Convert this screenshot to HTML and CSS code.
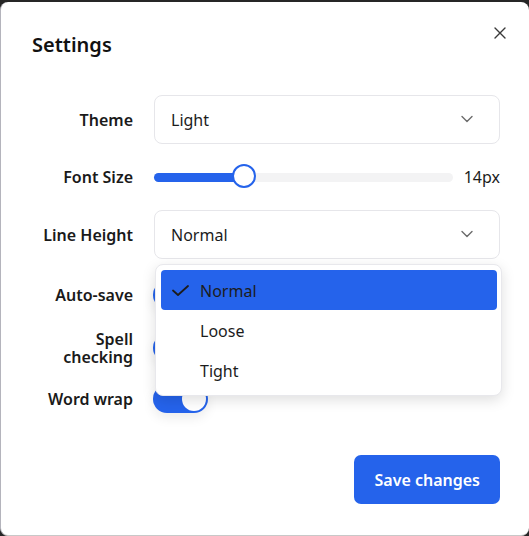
FILE: index.html
```html
<!DOCTYPE html>
<html lang="en">
<head>
<meta charset="utf-8">
<title>Settings</title>
<link rel="stylesheet" href="styles.css">
</head>
<body>
<div class="dialog">
  <h2 class="title">Settings</h2>
  <button class="close" aria-label="Close">
    <svg width="12" height="12" viewBox="0 0 12 12"><path d="M1 1 L11 11 M11 1 L1 11" stroke="#3a3a3a" stroke-width="1.4" fill="none" stroke-linecap="round"/></svg>
  </button>
  <div class="form">
    <div class="lbl r-theme">Theme</div>
    <div class="select r-theme">
      <span>Light</span>
      <svg class="chev" width="12" height="8" viewBox="0 0 12 8"><path d="M1 1.5 L6 6.5 L11 1.5" stroke="#6b6b6b" stroke-width="1.4" fill="none" stroke-linecap="round" stroke-linejoin="round"/></svg>
    </div>

    <div class="lbl r-font">Font Size</div>
    <div class="slider-row r-font">
      <div class="track">
        <div class="fill" style="width:30.1%"></div>
        <div class="thumb" style="left:30.1%"></div>
      </div>
      <span class="val">14px</span>
    </div>

    <div class="lbl r-lh">Line Height</div>
    <div class="select open r-lh">
      <span>Normal</span>
      <svg class="chev" width="12" height="8" viewBox="0 0 12 8"><path d="M1 1.5 L6 6.5 L11 1.5" stroke="#6b6b6b" stroke-width="1.4" fill="none" stroke-linecap="round" stroke-linejoin="round"/></svg>
      <div class="menu">
        <div class="item sel">
          <svg class="check" width="17" height="12" viewBox="0 0 17 12"><path d="M1 5.5 L6 10 L16 1" stroke="#1c1c1c" stroke-width="1.8" fill="none" stroke-linecap="round" stroke-linejoin="round"/></svg>
          Normal
        </div>
        <div class="item">Loose</div>
        <div class="item">Tight</div>
      </div>
    </div>

    <div class="lbl r-auto">Auto-save</div>
    <div class="tg-cell r-auto"><span class="toggle"><span class="knob"></span></span></div>

    <div class="lbl r-spell">Spell<br>checking</div>
    <div class="tg-cell r-spell"><span class="toggle"><span class="knob"></span></span></div>

    <div class="lbl r-wrap">Word wrap</div>
    <div class="tg-cell r-wrap"><span class="toggle"><span class="knob"></span></span></div>
  </div>
  <div class="footer">
    <button class="save">Save changes</button>
  </div>
</div>
</body>
</html>
```

FILE: styles.css
```css
* { box-sizing: border-box; }
html, body { margin: 0; padding: 0; }
body {
  background: #262626;
  width: 529px;
  height: 536px;
  overflow: hidden;
  font-family: "Noto Sans", "Segoe UI", sans-serif;
  color: #1c1c1c;
}
.dialog {
  position: relative;
  margin-top: 2px;
  height: 534px;
  background: #fff;
  border-radius: 8px;
  border-left: 1px solid #b4b4bc;
  border-bottom: 1px solid #c8c8c8;
  padding: 31px 29px 0 31px;
}
.title {
  margin: 0;
  font-size: 20px;
  line-height: 24px;
  font-weight: 600;
  color: #111;
}
.close {
  position: absolute;
  top: 25px;
  right: 23px;
  width: 12px;
  height: 12px;
  padding: 0;
  border: 0;
  background: none;
  display: flex;
}
.form {
  margin-top: 38px;
  display: grid;
  grid-template-columns: 101px 1fr;
  grid-template-rows: 49px 34px 49px 40px 34px 36px;
  column-gap: 21px;
  row-gap: 16px;
}
.lbl {
  align-self: center;
  text-align: right;
  font-size: 16px;
  line-height: 18px;
  font-weight: 600;
  color: #1a1a1a;
}
.select {
  position: relative;
  border: 1px solid #e6e6ea;
  border-radius: 8px;
  display: flex;
  align-items: center;
  justify-content: space-between;
  padding: 1px 26px 0 16px;
  font-size: 16px;
  color: #1c1c1c;
}
.chev { display: block; margin-top: -2px; }
.slider-row {
  display: flex;
  align-items: center;
  gap: 11px;
}
.track {
  position: relative;
  flex: 1;
  height: 9px;
  border-radius: 5px;
  background: #f3f3f4;
}
.fill {
  height: 100%;
  border-radius: 5px;
  background: #2563eb;
}
.thumb {
  position: absolute;
  top: 50%;
  width: 24px;
  height: 24px;
  margin: -13px 0 0 -12px;
  border-radius: 50%;
  background: #fff;
  border: 2px solid #2563eb;
}
.val {
  font-size: 16px;
  color: #1c1c1c;
}
.menu {
  position: absolute;
  top: calc(100% + 6px);
  left: 0;
  width: 347px;
  background: #fff;
  border: 1px solid #e8e8ec;
  border-radius: 8px;
  box-shadow: 0 4px 14px rgba(0,0,0,0.13);
  padding: 5px 4px 5px 5px;
  z-index: 5;
}
.item {
  position: relative;
  height: 40px;
  display: flex;
  align-items: center;
  padding-left: 39px;
  padding-top: 2px;
  font-size: 16px;
  color: #1c1c1c;
  border-radius: 4px;
}
.item.sel { background: #2563eb; }
.check {
  position: absolute;
  left: 11px;
  top: 15px;
}
.tg-cell {
  display: flex;
  align-items: center;
  margin-left: -1px;
}
.toggle {
  position: relative;
  display: block;
  width: 55px;
  height: 28px;
  border-radius: 14px;
  background: #2563eb;
  box-shadow: 0 5px 12px rgba(0,0,0,0.08);
}
.knob {
  position: absolute;
  right: 2px;
  top: 2px;
  width: 24px;
  height: 24px;
  border-radius: 50%;
  background: #fff;
}
.footer {
  margin-top: 38px;
  display: flex;
  justify-content: flex-end;
}
.save {
  height: 49px;
  padding: 0 20px;
  border: 0;
  border-radius: 7px;
  background: #2563eb;
  color: #fff;
  font-family: inherit;
  font-size: 16px;
  font-weight: 600;
}
```
